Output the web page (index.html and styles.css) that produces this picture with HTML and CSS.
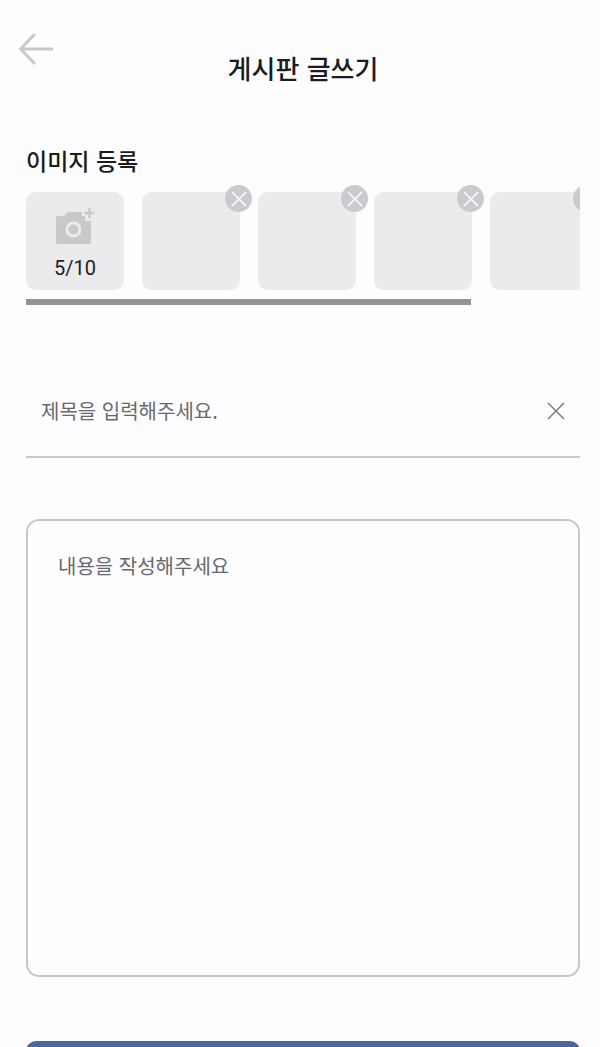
FILE: index.html
```html
<!DOCTYPE html>
<html lang="ko">
<head>
    <meta charset="UTF-8">
    <meta name="viewport" content="width=device-width, initial-scale=1.0">
    <title>게시판 글쓰기</title>
    <link rel="stylesheet" href="styles.css">
</head>
<body>

<div class="page">
    <!-- Header -->
    <header class="header">
        <svg class="back_icon" width="36" height="32" viewBox="0 0 36 32">
            <path d="M17 2 L3.500 16 L17 30 M3.500 16 H35" fill="none" stroke="#c9c9cc" stroke-width="3" stroke-linecap="round" stroke-linejoin="round"/>
        </svg>
        <h1 class="title">게시판 글쓰기</h1>
    </header>

    <!-- Image Section -->
    <h2 class="section_title">이미지 등록</h2>
    <div class="image_strip">
        <div class="tile add_tile">
            <svg class="camera_icon" width="42" height="38" viewBox="0 0 42 38">
                <path d="M1 10 Q1 8 3 8 H9 L13 4 H27 V8 H30 V13 H36 V34 Q36 36 34 36 H3 Q1 36 1 34 Z" fill="#c9c9cc"/>
                <circle cx="18.500" cy="21.500" r="6.500" fill="none" stroke="#ebeaec" stroke-width="3"/>
                <path d="M34.500 0 V10 M29.500 5 H39.500" fill="none" stroke="#c9c9cc" stroke-width="2.600"/>
            </svg>
            <span class="count">5/10</span>
        </div>
        <div class="tile"><div class="remove_btn"><svg width="16" height="16" viewBox="0 0 16 16"><path d="M1 1 L15 15 M15 1 L1 15" stroke="#fdfcfe" stroke-width="1.600"/></svg></div></div>
        <div class="tile"><div class="remove_btn"><svg width="16" height="16" viewBox="0 0 16 16"><path d="M1 1 L15 15 M15 1 L1 15" stroke="#fdfcfe" stroke-width="1.600"/></svg></div></div>
        <div class="tile"><div class="remove_btn"><svg width="16" height="16" viewBox="0 0 16 16"><path d="M1 1 L15 15 M15 1 L1 15" stroke="#fdfcfe" stroke-width="1.600"/></svg></div></div>
        <div class="tile"><div class="remove_btn"><svg width="16" height="16" viewBox="0 0 16 16"><path d="M1 1 L15 15 M15 1 L1 15" stroke="#fdfcfe" stroke-width="1.600"/></svg></div></div>
    </div>
    <div class="scroll_thumb"></div>

    <!-- Form Section -->
    <div class="title_field">
        <span class="placeholder">제목을 입력해주세요.</span>
        <svg width="18" height="18" viewBox="0 0 18 18">
            <path d="M1 1 L17 17 M17 1 L1 17" stroke="#77777b" stroke-width="1.400"/>
        </svg>
    </div>
    <div class="content_field">
        <span class="placeholder">내용을 작성해주세요</span>
    </div>

    <div class="submit_btn"></div>
</div>

</body>
</html>
```

FILE: styles.css
```css
* {
    box-sizing: border-box;
}
html, body {
    margin: 0;
    height: 100%;
    overflow: hidden;
}
body {
    font-family: "Noto Sans CJK KR", "Noto Sans", sans-serif;
    background-color: #fdfcfe;
}
.page {
    height: 1047px;
    padding: 0 20px 0 26px;
    overflow: hidden;
}
.header {
    position: relative;
    height: 137px;
    padding-top: 49px;
}
.back_icon {
    position: absolute;
    left: -9px;
    top: 33px;
}
.title {
    margin: 0;
    font-size: 26px;
    line-height: 38px;
    font-weight: 500;
    color: #1c1c1f;
    text-align: center;
}
.section_title {
    margin: 0;
    font-size: 23px;
    line-height: 47px;
    font-weight: 500;
    color: #1c1c1f;
}
.image_strip {
    display: flex;
    gap: 18px;
    padding-top: 8px;
    overflow: hidden;
}
.tile {
    position: relative;
    flex: 0 0 98px;
    height: 98px;
    border-radius: 10px;
    background-color: #ebeaec;
}
.add_tile {
    display: flex;
    flex-direction: column;
    align-items: center;
}
.camera_icon {
    margin-top: 16px;
    margin-left: 2px;
}
.count {
    font-family: Roboto, sans-serif;
    font-size: 20px;
    line-height: 24px;
    margin-top: 10px;
    color: #1c1c1f;
}
.remove_btn {
    position: absolute;
    top: -7px;
    right: -12px;
    width: 27px;
    height: 27px;
    border-radius: 50%;
    background-color: #cbcace;
    display: flex;
    align-items: center;
    justify-content: center;
}
.scroll_thumb {
    width: 445px;
    height: 6px;
    margin-top: 9px;
    background-color: #949397;
}
.title_field {
    display: flex;
    align-items: center;
    justify-content: space-between;
    height: 153px;
    padding: 60px 15px 0;
    border-bottom: 2px solid #c8c8cb;
}
.placeholder {
    font-size: 20px;
    line-height: 30px;
    color: #68686c;
}
.content_field {
    height: 458px;
    margin-top: 61px;
    padding: 30px;
    border: 2px solid #c8c8cb;
    border-radius: 13px;
}
.submit_btn {
    height: 60px;
    margin-top: 64px;
    border-radius: 10px;
    background-color: #4a6797;
}
```
